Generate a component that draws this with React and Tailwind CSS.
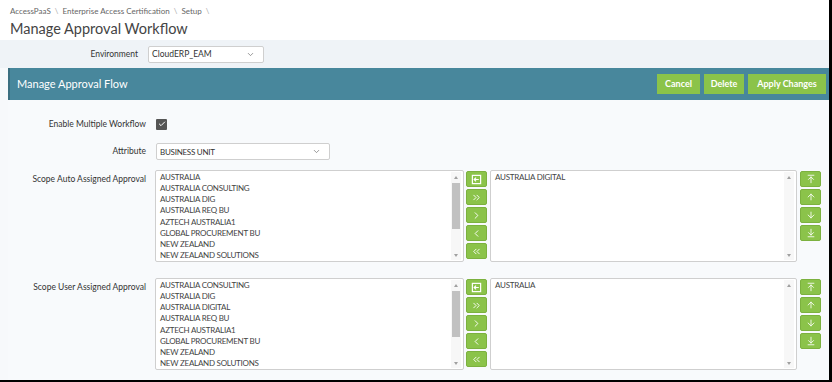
import React from 'react';
import {
  ChevronDown,
  ChevronsRight,
  ChevronRight,
  ChevronLeft,
  ChevronsLeft,
  ArrowUpToLine,
  ArrowUp,
  ArrowDown,
  ArrowDownToLine,
  Check,
} from 'lucide-react';

const font = { fontFamily: 'Lato, "Open Sans", sans-serif' };

const autoItems = [
  'AUSTRALIA',
  'AUSTRALIA CONSULTING',
  'AUSTRALIA DIG',
  'AUSTRALIA REQ BU',
  'AZTECH AUSTRALIA1',
  'GLOBAL PROCUREMENT BU',
  'NEW ZEALAND',
  'NEW ZEALAND SOLUTIONS',
];

const userItems = [
  'AUSTRALIA CONSULTING',
  'AUSTRALIA DIG',
  'AUSTRALIA DIGITAL',
  'AUSTRALIA REQ BU',
  'AZTECH AUSTRALIA1',
  'GLOBAL PROCUREMENT BU',
  'NEW ZEALAND',
  'NEW ZEALAND SOLUTIONS',
];

const BoxArrow = () => (
  <svg width="11" height="11" viewBox="0 0 12 12" fill="none" stroke="white" strokeWidth="1.3">
    <rect x="1.5" y="1.5" width="9" height="9" />
    <path d="M8.5 6H3.5M5.5 4L3.5 6L5.5 8" />
  </svg>
);

const GreenBtn = ({ children }) => (
  <button className="w-[21px] h-[16px] bg-[#8bc34a] border border-[#7cb13f] rounded-[2px] flex items-center justify-center text-white">
    {children}
  </button>
);

const ListBox = ({ items, thumb }) => (
  <div className="flex-1 h-[92px] bg-white border border-[#cfcfcf] rounded-[2px] flex">
    <div className="flex-1 pl-[4px] pt-[1px] text-[8px] tracking-[-0.25px] leading-[11.15px] text-[#444] uppercase">
      {items.map((it) => (
        <div key={it}>{it}</div>
      ))}
    </div>
    <div className="w-[10px] flex flex-col items-center bg-[#f7f7f7] mr-[2px] my-[1px]">
      <div className="h-[10px] flex items-center justify-center">
        <div className="w-0 h-0 border-l-[2.5px] border-r-[2.5px] border-b-[3px] border-l-transparent border-r-transparent border-b-[#a0a0a0]" />
      </div>
      <div className="flex-1 w-full">
        {thumb && <div className="mt-[1px] mx-[1px] h-[46px] bg-[#c1c1c1]" />}
      </div>
      <div className="h-[10px] flex items-center justify-center">
        <div className="w-0 h-0 border-l-[2.5px] border-r-[2.5px] border-t-[3px] border-l-transparent border-r-transparent border-t-[#a0a0a0]" />
      </div>
    </div>
  </div>
);

const DualList = ({ label, left, right }) => (
  <div className="flex items-start">
    <div className="w-[147px] pr-[9px] pt-[3px] text-right text-[8.5px] text-[#333]">{label}</div>
    <div className="w-[309px] flex">
      <ListBox items={left} thumb />
    </div>
    <div className="flex flex-col gap-[2px] pt-[1px] ml-[2px]">
      <GreenBtn><BoxArrow /></GreenBtn>
      <GreenBtn><ChevronsRight size={11} strokeWidth={2} /></GreenBtn>
      <GreenBtn><ChevronRight size={11} strokeWidth={2} /></GreenBtn>
      <GreenBtn><ChevronLeft size={11} strokeWidth={2} /></GreenBtn>
      <GreenBtn><ChevronsLeft size={11} strokeWidth={2} /></GreenBtn>
    </div>
    <div className="w-[307px] flex ml-[3px]">
      <ListBox items={right} />
    </div>
    <div className="flex flex-col gap-[2px] pt-[1px] ml-[3px]">
      <GreenBtn><ArrowUpToLine size={10} strokeWidth={2} /></GreenBtn>
      <GreenBtn><ArrowUp size={10} strokeWidth={2} /></GreenBtn>
      <GreenBtn><ArrowDown size={10} strokeWidth={2} /></GreenBtn>
      <GreenBtn><ArrowDownToLine size={10} strokeWidth={2} /></GreenBtn>
    </div>
  </div>
);

const Select = ({ value, width, caps }) => (
  <div className={`${width} h-[17px] bg-white border border-[#cfcfcf] rounded-[2px] flex items-center justify-between pl-[3px] pr-[8px] text-[#333]`}>
    <span className={caps ? 'text-[8px] tracking-[-0.25px]' : 'text-[8.5px]'}>{value}</span>
    <ChevronDown size={9} className="text-[#777]" />
  </div>
);

const App = () => {
  return (
    <div style={font} className="w-[832px] h-[382px] bg-black pr-[3px] pb-[2px]">
      <div className="w-full h-full bg-[#f7f9fb] flex flex-col">
        <div className="h-[40px] bg-white px-[10px] pt-[5px]">
          <div className="text-[8px] text-[#666] leading-[12px]">
            AccessPaaS <span className="text-[#aaa] mx-[2px]">\</span> Enterprise Access Certification{' '}
            <span className="text-[#aaa] mx-[2px]">\</span> Setup <span className="text-[#aaa] mx-[2px]">\</span>
          </div>
          <div className="text-[14.5px] text-[#444] leading-[20px] mt-[2px]">Manage Approval Workflow</div>
        </div>
        <div className="h-[28px] bg-[#eff3f7] flex items-center">
          <div className="w-[148px] pr-[10px] text-right text-[8.5px] text-[#333]">Environment</div>
          <Select value="CloudERP_EAM" width="w-[116px]" />
        </div>
        <div className="flex-1 ml-[8px] flex flex-col">
          <div className="h-[32px] bg-[#48879c] border-l-2 border-[#3b6f80] flex items-center justify-between pl-[7px] pr-[3px]">
            <div className="text-white text-[11px]">Manage Approval Flow</div>
            <div className="flex gap-[4px]">
              <button className="w-[43px] h-[20px] bg-[#8bc34a] text-white text-[9px] font-bold">Cancel</button>
              <button className="w-[40px] h-[20px] bg-[#8bc34a] text-white text-[9px] font-bold">Delete</button>
              <button className="w-[78px] h-[20px] bg-[#8bc34a] text-white text-[9px] font-bold">Apply Changes</button>
            </div>
          </div>
          <div className="flex-1 bg-[#f8fafc] pt-[17px] flex flex-col">
            <div className="flex items-center h-[14px]">
              <div className="w-[148px] pr-[10px] text-right text-[8.5px] text-[#333]">Enable Multiple Workflow</div>
              <div className="w-[11px] h-[11px] bg-[#555] rounded-[1px] flex items-center justify-center">
                <Check size={8} strokeWidth={3} className="text-white" />
              </div>
            </div>
            <div className="flex items-center mt-[12px]">
              <div className="w-[148px] pr-[10px] text-right text-[8.5px] text-[#333]">Attribute</div>
              <Select value="BUSINESS UNIT" width="w-[174px]" caps />
            </div>
            <div className="mt-[10px]">
              <DualList label="Scope Auto Assigned Approval" left={autoItems} right={['AUSTRALIA DIGITAL']} />
            </div>
            <div className="mt-[16px]">
              <DualList label="Scope User Assigned Approval" left={userItems} right={['AUSTRALIA']} />
            </div>
          </div>
        </div>
      </div>
    </div>
  );
};

export default App;
